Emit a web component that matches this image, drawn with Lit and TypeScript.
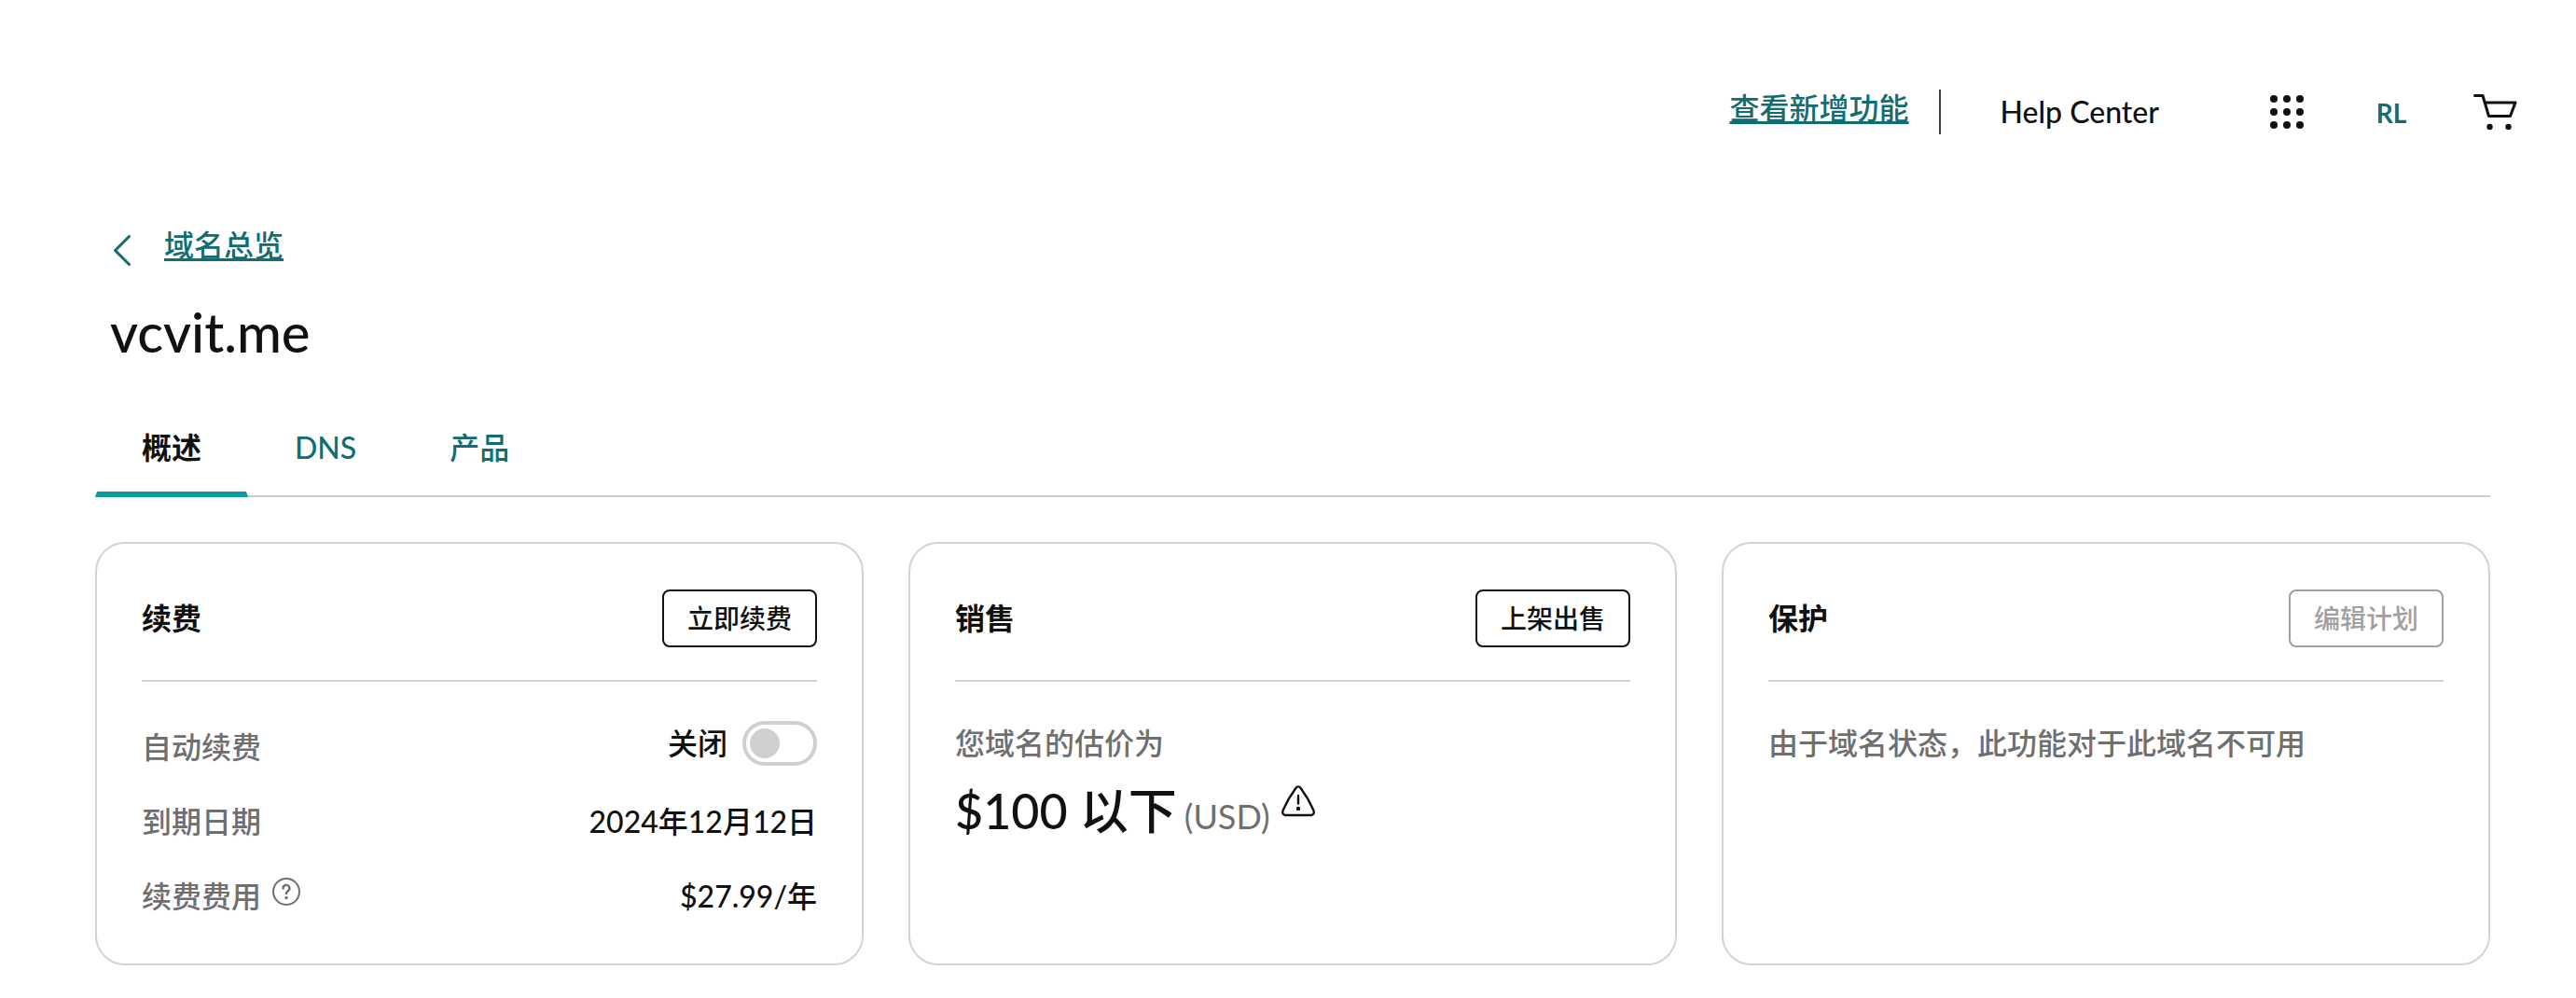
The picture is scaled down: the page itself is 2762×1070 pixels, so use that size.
import { LitElement, html, css, svg } from "lit";
import { customElement, property, state } from "lit/decorators.js";

const tokens = css`
  :host {
    --ink: #111111;
    --muted: #6f6f6f;
    --teal: #116d70;
    --accent: #0a9b9b;
    --rule: #cccccc;
    --card-rule: #ccd5db;
    --disabled: #a0a0a0;
  }
  * {
    box-sizing: border-box;
  }
  button {
    font: inherit;
    color: inherit;
    background: none;
    border: 0;
    margin: 0;
    padding: 0;
    cursor: pointer;
  }
`;

@customElement("info-card")
export class InfoCard extends LitElement {
  @property() heading = "";
  @property() action = "";
  @property({ type: Boolean }) disabled = false;

  static styles = [
    tokens,
    css`
      :host {
        display: block;
        min-width: 0;
        padding: 48px;
        border: 2px solid var(--card-rule);
        border-radius: 32px;
      }
      .head {
        display: flex;
        align-items: center;
        justify-content: space-between;
        min-height: 64px;
      }
      .title {
        margin: 0;
        font-size: 32px;
        font-weight: 700;
        line-height: 48px;
      }
      .action {
        padding: 9px 25px;
        border: 2px solid var(--ink);
        border-radius: 8px;
        font-size: 28px;
        font-weight: 500;
        line-height: 40px;
      }
      .action:disabled {
        color: var(--disabled);
        border-color: var(--disabled);
        cursor: default;
      }
      .rule {
        height: 2px;
        margin: 34px 0 42px;
        border: 0;
        background: var(--card-rule);
      }
    `,
  ];

  render() {
    return html`
      <header class="head">
        <h2 class="title">${this.heading}</h2>
        <button class="action" ?disabled=${this.disabled}>${this.action}</button>
      </header>
      <hr class="rule" />
      <slot></slot>
    `;
  }
}

const TABS = [
  { id: "overview", label: "概述" },
  { id: "dns", label: "DNS" },
  { id: "products", label: "产品" },
];

@customElement("app-root")
export class AppRoot extends LitElement {
  @state() private tab = "overview";
  @state() private autoRenew = false;

  static styles = [
    tokens,
    css`
      :host {
        display: block;
        min-height: 100vh;
        background: #ffffff;
        color: var(--ink);
        font-family: Lato, "Noto Sans CJK SC", sans-serif;
        font-size: 32px;
        font-weight: 500;
        line-height: 48px;
      }
      .link {
        color: var(--teal);
        text-decoration: underline;
        text-decoration-thickness: 3px;
        text-underline-offset: 2px;
        text-decoration-skip-ink: none;
      }
      .topbar {
        display: flex;
        align-items: center;
        justify-content: flex-end;
        padding: 96px 54px 0 0;
      }
      .news {
        align-self: flex-start;
        line-height: 40px;
      }
      .divider {
        width: 2px;
        height: 48px;
        margin: 0 64px 0 32px;
        background: #444444;
      }
      .help {
        margin-right: 105px;
        color: var(--ink);
        text-decoration: none;
      }
      .tools {
        display: flex;
        gap: 48px;
      }
      .tool {
        display: flex;
        align-items: center;
        justify-content: center;
        width: 64px;
        height: 48px;
      }
      .account {
        padding-top: 2px;
        color: var(--teal);
        font-size: 28px;
        font-weight: 700;
      }
      .main {
        padding: 96px 92px 32px 102px;
      }
      .back {
        display: flex;
        gap: 36px;
        min-height: 48px;
        padding-left: 20px;
        line-height: 46px;
      }
      .chevron {
        margin-top: 12px;
      }
      .domain {
        margin: 32px 0 48px;
        padding-left: 16px;
        font-size: 58px;
        font-weight: 500;
        line-height: 72px;
      }
      .tabs {
        display: flex;
        box-shadow: inset 0 -2px var(--rule);
      }
      .tab {
        padding: 16px 48px 23px;
        border: 2px solid transparent;
        border-width: 0 2px 6px;
        color: var(--teal);
      }
      .tab[aria-selected="true"] {
        color: var(--ink);
        border-bottom-color: var(--accent);
        font-weight: 700;
      }
      .cards {
        display: grid;
        grid-template-columns: repeat(3, minmax(0, 1fr));
        gap: 48px;
        margin-top: 48px;
      }
      .rows {
        display: flex;
        flex-direction: column;
        gap: 32px;
      }
      .row {
        display: flex;
        justify-content: space-between;
      }
      .row-tall {
        min-height: 52px;
      }
      .row-tall .name {
        align-self: flex-end;
      }
      .name,
      .note {
        color: var(--muted);
      }
      .name {
        display: flex;
        gap: 12px;
      }
      .note {
        margin: 0;
      }
      .switch {
        display: flex;
        align-items: center;
        gap: 16px;
        height: 48px;
      }
      .toggle {
        appearance: none;
        display: block;
        width: 80px;
        height: 48px;
        margin: 0;
        padding: 4px;
        border: 4px solid #cfcfcf;
        border-radius: 24px;
        cursor: pointer;
      }
      .toggle::before {
        content: "";
        display: block;
        width: 32px;
        height: 32px;
        border-radius: 50%;
        background: #cfcfcf;
      }
      .toggle:checked {
        border-color: var(--accent);
      }
      .toggle:checked::before {
        margin-left: 32px;
        background: var(--accent);
      }
      .hint {
        height: 30px;
        margin-top: 4px;
      }
      .price {
        display: flex;
        align-items: baseline;
        margin: 16px 0 0;
        line-height: 64px;
      }
      .amount {
        font-size: 52px;
        font-weight: 500;
      }
      .currency {
        margin-left: 8px;
        color: var(--muted);
        font-size: 36px;
        font-weight: 400;
      }
      .warn {
        align-self: flex-start;
        height: 36px;
        margin: 4px 0 0 12px;
      }
      svg {
        display: block;
      }
    `,
  ];

  private appsIcon() {
    const steps = [5, 19, 33];
    return html`<svg width="38" height="38" viewBox="0 0 38 38" fill="#111111" aria-hidden="true">
      ${steps.map((y) => steps.map((x) => svg`<circle cx=${x} cy=${y} r="4" />`))}
    </svg>`;
  }

  private cartIcon() {
    return html`<svg width="48" height="40" viewBox="1 0 48 40" aria-hidden="true">
      <path
        d="M2.500 2.500H11L17.500 24.500H40.500L46 10H13.500"
        fill="none" stroke="#111111" stroke-width="3" stroke-linecap="round" stroke-linejoin="round"
      />
      <circle cx="18.500" cy="36" r="3.200" fill="#111111" />
      <circle cx="38.500" cy="36" r="3.200" fill="#111111" />
    </svg>`;
  }

  render() {
    return html`
      <header class="topbar">
        <a class="link news" href="#new">查看新增功能</a>
        <span class="divider"></span>
        <a class="help" href="#help">Help Center</a>
        <nav class="tools">
          <button class="tool" aria-label="应用">${this.appsIcon()}</button>
          <button class="tool account">RL</button>
          <button class="tool" aria-label="购物车">${this.cartIcon()}</button>
        </nav>
      </header>

      <main class="main">
        <nav class="back">
          <svg class="chevron" width="18" height="33" viewBox="0 0 18 33" aria-hidden="true">
            <path d="M16.500 1.500L1.500 16.500L16.500 31.500" fill="none" stroke="#116d70"
              stroke-width="3" stroke-linecap="round" stroke-linejoin="round" />
          </svg>
          <a class="link" href="#domains">域名总览</a>
        </nav>
        <h1 class="domain">vcvit.me</h1>

        <div class="tabs" role="tablist">
          ${TABS.map(
            (t) => html`<button
              class="tab"
              role="tab"
              aria-selected=${this.tab === t.id ? "true" : "false"}
              @click=${() => (this.tab = t.id)}
            >${t.label}</button>`
          )}
        </div>

        <section class="cards">
          <info-card heading="续费" action="立即续费">
            <div class="rows">
              <div class="row row-tall">
                <label class="name" for="auto-renew">自动续费</label>
                <span class="switch">
                  <span>${this.autoRenew ? "开启" : "关闭"}</span>
                  <input
                    id="auto-renew"
                    class="toggle"
                    type="checkbox"
                    role="switch"
                    .checked=${this.autoRenew}
                    @change=${(e: Event) =>
                      (this.autoRenew = (e.target as HTMLInputElement).checked)}
                  />
                </span>
              </div>
              <div class="row">
                <span class="name">到期日期</span>
                <span>2024年12月12日</span>
              </div>
              <div class="row">
                <span class="name">
                  续费费用
                  <button class="hint" aria-label="费用说明">
                    <svg width="30" height="30" viewBox="0 0 30 30" fill="none" stroke="#6f6f6f"
                      stroke-width="2" stroke-linecap="round" aria-hidden="true">
                      <circle cx="15" cy="15" r="14" />
                      <path stroke-width="2.400" d="M11.600 11.600A3.400 3.400 0 1 1 16.800 14.200C15.500 15 15 15.600 15 17" />
                      <circle cx="15" cy="21.500" r="1.700" fill="#6f6f6f" stroke="none" />
                    </svg>
                  </button>
                </span>
                <span>$27.99/年</span>
              </div>
            </div>
          </info-card>

          <info-card heading="销售" action="上架出售">
            <p class="note">您域名的估价为</p>
            <p class="price">
              <span class="amount">$100 以下</span>
              <span class="currency">(USD)</span>
              <button class="warn" aria-label="估价说明">
                <svg width="36" height="34" viewBox="0 0 36 34" fill="none" stroke="#111111"
                  stroke-width="2.400" stroke-linecap="round" stroke-linejoin="round" aria-hidden="true">
                  <path d="M15.200 3.200Q18 -0.500 20.800 3.200Q28.500 13.500 34.300 26.500Q36 31.800 31.500 32H4.500Q0 31.800 1.700 26.500Q7.500 13.500 15.200 3.200Z" />
                  <path d="M18 11V19.500" />
                  <circle cx="18" cy="25" r="2.200" fill="#111111" stroke="none" />
                </svg>
              </button>
            </p>
          </info-card>

          <info-card heading="保护" action="编辑计划" disabled>
            <p class="note">由于域名状态，此功能对于此域名不可用</p>
          </info-card>
        </section>
      </main>
    `;
  }
}
